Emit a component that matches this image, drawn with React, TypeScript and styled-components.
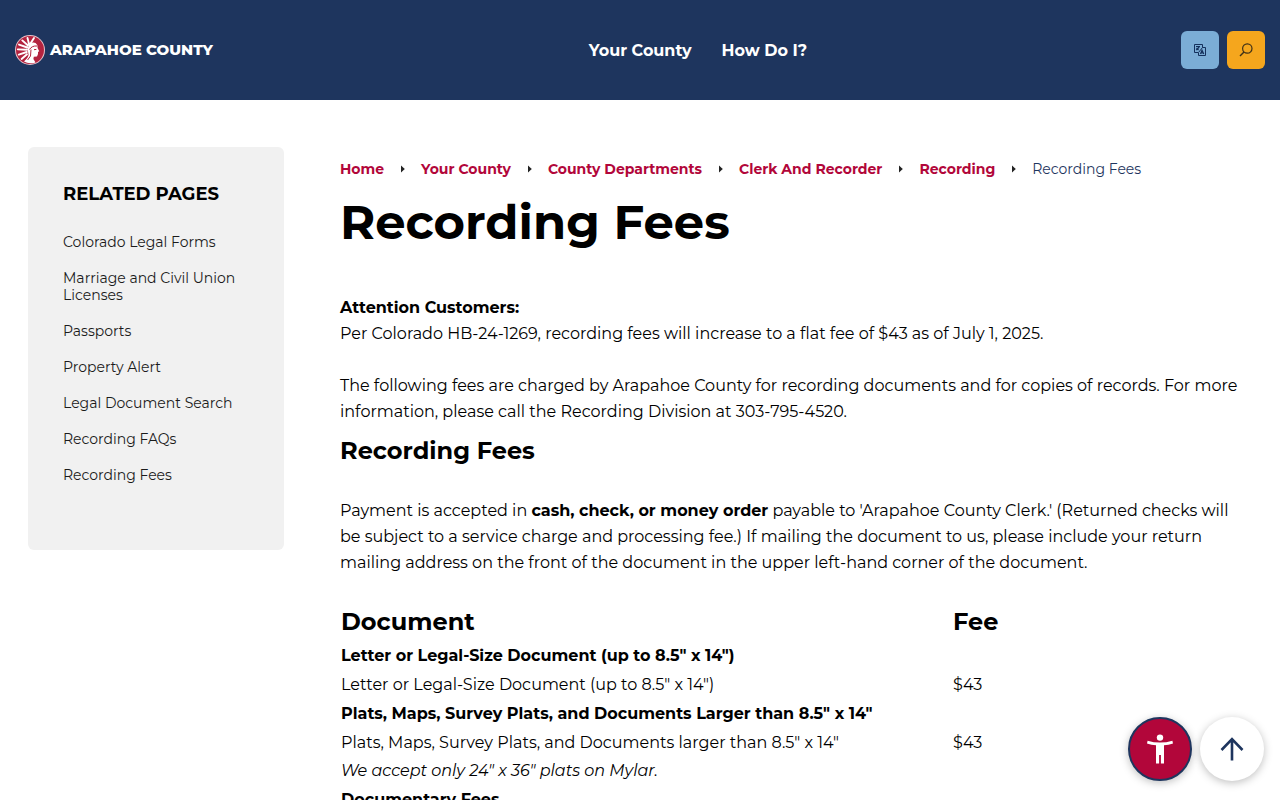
import React from "react";
import styled, { createGlobalStyle } from "styled-components";

const navy = "#1e355e";
const crimson = "#b2063a";

const GlobalStyle = createGlobalStyle`
  *, *::before, *::after { box-sizing: border-box; }
  body {
    margin: 0;
    background: #fff;
    color: #000;
    font-family: Montserrat, Inter, "Liberation Sans", sans-serif;
    font-size: 16px;
    line-height: 26px;
  }
`;

const Header = styled.header`
  display: flex;
  align-items: center;
  justify-content: space-between;
  height: 100px;
  padding: 0 15px;
  background: ${navy};
`;

const Brand = styled.a`
  display: flex;
  align-items: center;
  gap: 5px;
  min-width: 200px;
  color: #fff;
  font-size: 15px;
  font-weight: 800;
  line-height: 20px;
  text-decoration: none;
  white-space: nowrap;
`;

const MainNav = styled.nav`
  display: flex;
  gap: 30px;
  padding-top: 2px;
`;

const NavLink = styled.a`
  color: #fff;
  font-weight: 700;
  text-decoration: none;
`;

const Actions = styled.div`
  display: flex;
  gap: 8px;
`;

const ActionButton = styled.button<{ $color: string }>`
  display: grid;
  place-items: center;
  width: 38px;
  height: 38px;
  padding: 0;
  border: 0;
  border-radius: 6px;
  background: ${(p) => p.$color};
  cursor: pointer;
`;

const Page = styled.div`
  display: grid;
  grid-template-columns: 256px minmax(0, 1fr);
  column-gap: 56px;
  align-items: start;
  padding: 47px 40px 0 28px;
`;

const Sidebar = styled.aside`
  padding: 34px 35px 66px;
  border-radius: 6px;
  background: #f1f1f1;
`;

const SidebarTitle = styled.h2`
  margin: 0 0 27px;
  font-size: 18px;
  line-height: 26px;
`;

const SidebarList = styled.ul`
  display: flex;
  flex-direction: column;
  gap: 19px;
  margin: 0;
  padding: 0;
  list-style: none;
`;

const SidebarLink = styled.a`
  display: block;
  color: #1b1b1b;
  font-size: 14px;
  line-height: 17px;
  text-decoration: none;
`;

const Breadcrumbs = styled.ol`
  display: flex;
  align-items: center;
  gap: 16px;
  margin: 0;
  padding: 12px 0 0;
  list-style: none;
  font-size: 14px;
  line-height: 20px;
`;

const Crumb = styled.li`
  display: flex;
  align-items: center;
  gap: 16px;
  color: ${navy};
  white-space: nowrap;
`;

const CrumbLink = styled.a`
  color: ${crimson};
  font-weight: 700;
  text-decoration: none;
`;

const Title = styled.h1`
  margin: 12px 0 42px;
  font-size: 48px;
  line-height: 62px;
`;

const Subtitle = styled.h2`
  margin: 8px 0 29px;
  font-size: 24px;
  line-height: 36px;
`;

const Paragraph = styled.p<{ $space?: number }>`
  margin: 0 0 ${(p) => p.$space ?? 0}px;
`;

const FeeTable = styled.table`
  width: 100%;
  border-collapse: collapse;
  table-layout: fixed;
`;

const HeadCell = styled.th<{ $width?: string }>`
  width: ${(p) => p.$width ?? "auto"};
  height: 39px;
  padding: 0 1px;
  font-size: 24px;
  text-align: left;
`;

const GroupCell = styled.th`
  height: 30px;
  padding: 0 1px;
  text-align: left;
`;

const Cell = styled.td`
  height: 28px;
  padding: 0 1px;
`;

const Floating = styled.div`
  position: fixed;
  right: 16px;
  bottom: 19px;
  display: flex;
  gap: 8px;
`;

const RoundButton = styled.button<{ $primary?: boolean }>`
  display: grid;
  place-items: center;
  width: 64px;
  height: 64px;
  padding: 0;
  border: ${(p) => (p.$primary ? `2px solid ${navy}` : "0")};
  border-radius: 50%;
  background: ${(p) => (p.$primary ? crimson : "#fff")};
  box-shadow: 0 2px 8px rgba(0, 0, 0, 0.25);
  cursor: pointer;
`;

const Seal = () => (
  <svg width="30" height="30" viewBox="0 0 30 30" aria-hidden="true">
    <circle cx="15" cy="15" r="15" fill="#e9c3cb" />
    <circle cx="15" cy="15" r="14" fill="#b3233f" />
    <g stroke="#fff" strokeWidth="1.9" strokeLinecap="round">
      <path d="M15.5 8.5 L19 3M14 9 L12.5 3M13 10.5 L7.3 5.4M12.3 12.5 L4 9.6M12 14.8 L2.8 14.4M11.8 17 L3.8 19.6M12 19.3 L6.6 24" />
    </g>
    <path d="M14.5 8.5 Q20 6 22.3 10 L22.6 13 L24.2 16.2 L23 17 L23 19 L22 21.6 L18.8 21.7 L18.4 24 L20.5 27.4 Q14 29.5 9 26.5 Q13 23.5 13.6 20 L12.6 14 Z" fill="#fff" />
    <path d="M14.5 14.5 Q17 10.5 22 11M16 14.5 L15.5 21 L12.6 25M19 14.7 L21.4 14.4" fill="none" stroke="#b3233f" strokeWidth="1" />
  </svg>
);

const TranslateIcon = () => (
  <svg width="14" height="14" viewBox="0 0 14 14" fill="none" stroke="#14305c" aria-hidden="true">
    <path d="M5 9.5H1.5V1.5H9.5V4.5H12.5V12.5H5.5V9.5L9.5 4.5" />
    <path d="M3 3.5H7M3.3 7L6.2 4M3.5 5L5.5 7M7.5 11L9 7.3L10.8 11M8 9.8H10.4" strokeWidth="1.2" />
  </svg>
);

const SearchIcon = () => (
  <svg width="14" height="14" viewBox="0 0 14 14" fill="none" stroke="#3f3118" strokeWidth="1.2" aria-hidden="true">
    <circle cx="8.3" cy="5.5" r="4.7" />
    <path d="M5 8.9L1 13" strokeWidth="1.4" />
  </svg>
);

const CrumbArrow = () => (
  <svg width="5" height="8" viewBox="0 0 5 8" aria-hidden="true">
    <path d="M1 0.5L4.8 4L1 7.5Z" fill="#222" />
  </svg>
);

const PersonIcon = () => (
  <svg width="28" height="32" viewBox="0 0 28 32" fill="#fff" aria-hidden="true">
    <circle cx="14" cy="4.6" r="3.2" />
    <path d="M1.6 7.7Q14 11.5 26.4 7.7L27 10.5Q22.5 12 18 12.3V30.5H14.9V22H13.1V30.5H10V12.3Q5.5 12 1 10.5Z" />
  </svg>
);

const UpIcon = () => (
  <svg width="24" height="26" viewBox="0 0 24 26" fill="none" stroke={navy} strokeWidth="2.6" aria-hidden="true">
    <path d="M12 24.5V3M1.5 14L12 3.2L22.5 14" />
  </svg>
);

const related = [
  "Colorado Legal Forms",
  "Marriage and Civil Union Licenses",
  "Passports",
  "Property Alert",
  "Legal Document Search",
  "Recording FAQs",
  "Recording Fees",
];

const trail = ["Home", "Your County", "County Departments", "Clerk And Recorder", "Recording"];

export default function App() {
  return (
    <>
      <GlobalStyle />
      <Header>
        <Brand href="#">
          <Seal />
          ARAPAHOE COUNTY
        </Brand>
        <MainNav aria-label="Main">
          <NavLink href="#">Your County</NavLink>
          <NavLink href="#">How Do I?</NavLink>
        </MainNav>
        <Actions>
          <ActionButton $color="#7badd6" aria-label="Translate">
            <TranslateIcon />
          </ActionButton>
          <ActionButton $color="#f5a61d" aria-label="Search">
            <SearchIcon />
          </ActionButton>
        </Actions>
      </Header>
      <Page>
        <Sidebar>
          <SidebarTitle>RELATED PAGES</SidebarTitle>
          <SidebarList>
            {related.map((name) => (
              <li key={name}>
                <SidebarLink href="#">{name}</SidebarLink>
              </li>
            ))}
          </SidebarList>
        </Sidebar>
        <main>
          <nav aria-label="Breadcrumb">
            <Breadcrumbs>
              {trail.map((name) => (
                <Crumb key={name}>
                  <CrumbLink href="#">{name}</CrumbLink>
                  <CrumbArrow />
                </Crumb>
              ))}
              <Crumb aria-current="page">Recording Fees</Crumb>
            </Breadcrumbs>
          </nav>
          <Title>Recording Fees</Title>
          <Paragraph $space={26}>
            <strong>Attention Customers:</strong>
            <br />
            Per Colorado HB-24-1269, recording fees will increase to a flat fee of $43 as of July 1, 2025.
          </Paragraph>
          <Paragraph>
            The following fees are charged by Arapahoe County for recording documents and for copies of records. For more
            information, please call the Recording Division at 303-795-4520.
          </Paragraph>
          <Subtitle>Recording Fees</Subtitle>
          <Paragraph $space={26}>
            Payment is accepted in <strong>cash, check, or money order</strong> payable to 'Arapahoe County Clerk.'
            (Returned checks will be subject to a service charge and processing fee.) If mailing the document to us,
            please include your return mailing address on the front of the document in the upper left-hand corner of the
            document.
          </Paragraph>
          <FeeTable>
            <thead>
              <tr>
                <HeadCell scope="col" $width="68%">Document</HeadCell>
                <HeadCell scope="col">Fee</HeadCell>
              </tr>
            </thead>
            <tbody>
              <tr>
                <GroupCell colSpan={2}>Letter or Legal-Size Document (up to 8.5" x 14")</GroupCell>
              </tr>
              <tr>
                <Cell>Letter or Legal-Size Document (up to 8.5" x 14")</Cell>
                <Cell>$43</Cell>
              </tr>
              <tr>
                <GroupCell colSpan={2}>Plats, Maps, Survey Plats, and Documents Larger than 8.5" x 14"</GroupCell>
              </tr>
              <tr>
                <Cell>Plats, Maps, Survey Plats, and Documents larger than 8.5" x 14"</Cell>
                <Cell>$43</Cell>
              </tr>
              <tr>
                <Cell colSpan={2}>
                  <em>We accept only 24" x 36" plats on Mylar.</em>
                </Cell>
              </tr>
              <tr>
                <GroupCell colSpan={2}>Documentary Fees</GroupCell>
              </tr>
            </tbody>
          </FeeTable>
        </main>
      </Page>
      <Floating>
        <RoundButton $primary aria-label="Accessibility options">
          <PersonIcon />
        </RoundButton>
        <RoundButton aria-label="Back to top">
          <UpIcon />
        </RoundButton>
      </Floating>
    </>
  );
}
